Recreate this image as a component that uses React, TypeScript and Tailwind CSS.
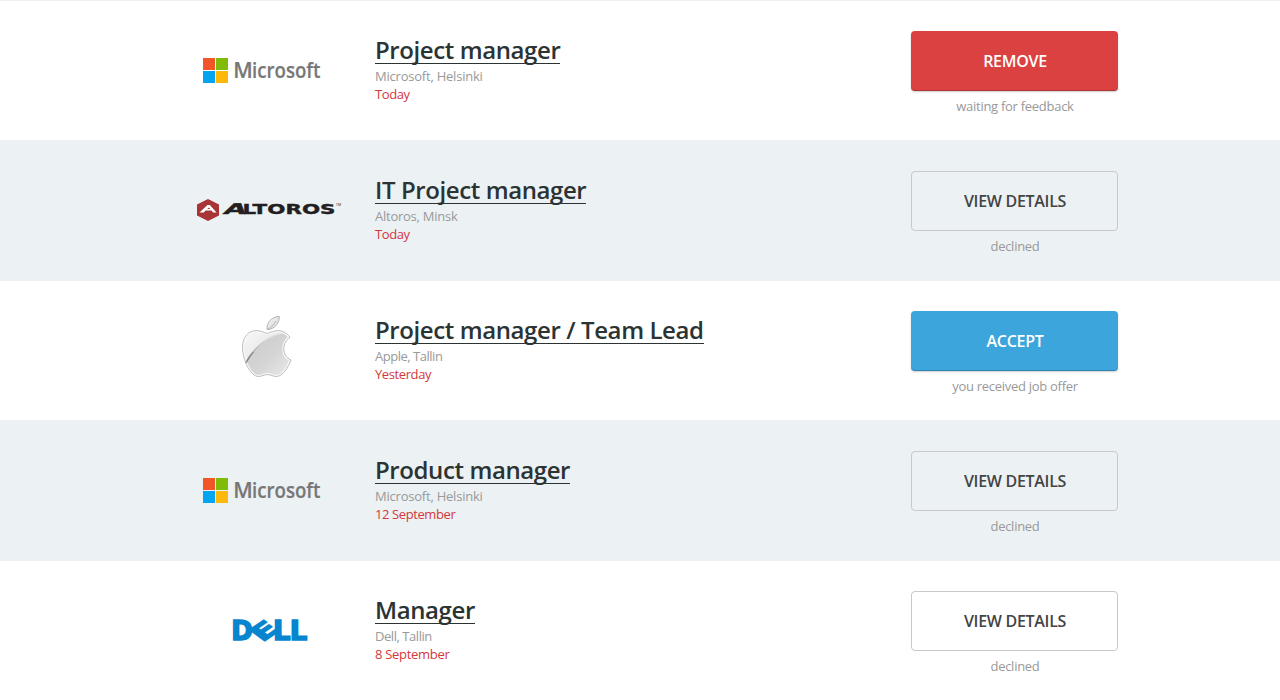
import React from "react";

const openSans = "font-['Open_Sans','Noto_Sans',sans-serif]";
const dejavu = "font-['DejaVu_Sans',sans-serif]";

function MicrosoftLogo() {
  return (
    <svg width="160" height="50" viewBox="190 45 160 50" role="img" aria-label="Microsoft">
      <path fill="#f25528" d="M203 58h12v12h-12z" />
      <path fill="#7fbb08" d="M216 58h12v12h-12z" />
      <path fill="#04a5f0" d="M203 71h12v12h-12z" />
      <path fill="#fdb90a" d="M216 71h12v12h-12z" />
      <g className={openSans} fontSize="21.500" fontWeight="600" fill="#777" stroke="#777" strokeWidth=".2">
        <text x="233.300" y="78" textLength="19.500" lengthAdjust="spacingAndGlyphs">M</text>
        <text x="252" y="78" textLength="68.500" lengthAdjust="spacingAndGlyphs">icrosoft</text>
      </g>
    </svg>
  );
}

function AltorosLogo() {
  return (
    <svg width="160" height="40" viewBox="190 190 160 40" role="img" aria-label="Altoros">
      <path fill="#a83438" d="M208 199l11 5.600v11L208 221l-11-5.400v-11z" />
      <path fill="#fff" fillRule="evenodd" d="M199.500 212.500l8-7.500h2.300l6.700 7.500h-3.400l-1.600-1.900h-5.800l-1.900 1.900zM207.200 209h3l-1.200-1.500z" />
      <g className={dejavu} fontSize="14.800" fontWeight="700" fill="#231f20" stroke="#231f20" strokeWidth=".4">
        <text x="0" y="0" transform="matrix(1 0 -.35 1 222.500 213.900)" textLength="22.500" lengthAdjust="spacingAndGlyphs">A</text>
        <text x="242.500" y="213.900" textLength="93" lengthAdjust="spacingAndGlyphs">LTOROS</text>
      </g>
      <text x="336" y="205.500" className={openSans} fontSize="3.500" fontWeight="600" fill="#555" textLength="5" lengthAdjust="spacingAndGlyphs">TM</text>
    </svg>
  );
}

function AppleLogo() {
  const body =
    "M266.500 333.400C263 332.500 260.500 330.600 256 330.600C248 330.600 242 337 242 347C242 360 250 376.500 258 376.500C261.500 376.500 263.500 374.600 267 374.600C270.500 374.600 272.500 376.500 276 376.500C282 376.500 288 367 290.500 360C286 358 283.300 354 283.300 348.700C283.300 343.500 285.800 340 289.500 337.300C286.500 333 282 330.600 277.500 330.600C273 330.600 270 332.800 266.500 333.400Z";
  return (
    <svg width="75" height="80" viewBox="230.500 310 75 80" role="img" aria-label="Apple">
      <defs>
        <linearGradient id="silver" x1="0" y1="0" x2="1" y2="1">
          <stop offset="0" stopColor="#fafafa" />
          <stop offset=".5" stopColor="#e6e6e6" />
          <stop offset="1" stopColor="#dadada" />
        </linearGradient>
        <linearGradient id="shade" x1="0" y1="1" x2="1" y2="0">
          <stop offset="0" stopColor="#666" />
          <stop offset=".25" stopColor="#a9a9a9" />
          <stop offset=".6" stopColor="#cecece" />
          <stop offset="1" stopColor="#f0f0f0" />
        </linearGradient>
        <linearGradient id="lower" x1="0" y1="0" x2="1" y2="1">
          <stop offset="0" stopColor="#cacaca" />
          <stop offset=".5" stopColor="#d4d4d4" />
          <stop offset="1" stopColor="#ededed" />
        </linearGradient>
        <clipPath id="apple-body"><path d={body} /></clipPath>
      </defs>
      <path d={body} fill="url(#silver)" />
      <g clipPath="url(#apple-body)">
        <path fill="url(#lower)" d="M245 363C252 350 264 337 284 332L294 332V380H250Z" />
        <path fill="none" stroke="url(#shade)" strokeWidth="1.200" d="M245 363C252 350 264 337 284 332" />
        <path d={body} fill="none" stroke="#f8f8f8" strokeWidth="3.200" />
      </g>
      <path d={body} fill="none" stroke="#b8b8b8" strokeWidth=".9" />
      <path d="M245.300 363C248 358.500 250 355.500 253 352" fill="none" stroke="#808080" strokeWidth="1.100" />
      <path d="M266.500 329.500C266 322.500 271 317 278.700 316.300C279.300 323 274 329.500 266.500 329.500Z" fill="url(#silver)" stroke="#aaa" strokeWidth=".9" />
      <path d="M266.800 329.300C270 328 273 325 275.500 321" fill="none" stroke="#b7b7b7" strokeWidth="1" />
    </svg>
  );
}

function DellLogo() {
  return (
    <svg width="100" height="50" viewBox="218.500 605 100 50" role="img" aria-label="Dell">
      <g className={dejavu} fontWeight="700" fill="#0785cf" stroke="#0785cf">
        <g fontSize="26" strokeWidth="1.500">
          <text x="230.700" y="639.600" textLength="21.500" lengthAdjust="spacingAndGlyphs">D</text>
          <text x="272.500" y="639.600" textLength="17.500" lengthAdjust="spacingAndGlyphs">L</text>
          <text x="289.200" y="639.600" textLength="17.500" lengthAdjust="spacingAndGlyphs">L</text>
        </g>
        <text x="0" y="0" fontSize="20" strokeWidth="1" transform="matrix(1.380 -.94 1.050 .76 261.800 642.600)">E</text>
      </g>
    </svg>
  );
}

type Job = {
  title: string;
  place: string;
  date: string;
  action: string;
  status: string;
  logo: () => React.JSX.Element;
  tone: "danger" | "outline" | "primary";
  placeTracking: string;
  dateTracking: string;
};

const jobs: Job[] = [
  { title: "Project manager", place: "Microsoft, Helsinki", date: "Today", action: "REMOVE", status: "waiting for feedback", logo: MicrosoftLogo, tone: "danger", placeTracking: "tracking-[-0.22px]", dateTracking: "tracking-[-0.4px]" },
  { title: "IT Project manager", place: "Altoros, Minsk", date: "Today", action: "VIEW DETAILS", status: "declined", logo: AltorosLogo, tone: "outline", placeTracking: "tracking-[-0.25px]", dateTracking: "tracking-[-0.4px]" },
  { title: "Project manager / Team Lead", place: "Apple, Tallin", date: "Yesterday", action: "ACCEPT", status: "you received job offer", logo: AppleLogo, tone: "primary", placeTracking: "tracking-[-0.48px]", dateTracking: "tracking-[-0.4px]" },
  { title: "Product manager", place: "Microsoft, Helsinki", date: "12 September", action: "VIEW DETAILS", status: "declined", logo: MicrosoftLogo, tone: "outline", placeTracking: "tracking-[-0.22px]", dateTracking: "tracking-[-0.4px]" },
  { title: "Manager", place: "Dell, Tallin", date: "8 September", action: "VIEW DETAILS", status: "declined", logo: DellLogo, tone: "outline", placeTracking: "tracking-[-0.45px]", dateTracking: "tracking-[-0.3px]" },
];

const tones = {
  danger: "bg-[#dc4141] text-white border-b border-[#b03434] shadow-[0_1px_2px_rgba(0,0,0,0.2)]",
  primary: "bg-[#3ba5dc] text-white border-b border-[#2f84b0] shadow-[0_1px_2px_rgba(0,0,0,0.2)]",
  outline: "border border-[#c8c8c8] text-[#444]",
};

export default function App() {
  return (
    <main className={`h-[700px] overflow-hidden bg-white ${openSans}`}>
      {jobs.map((job, i) => {
        const Logo = job.logo;
        const wideLogo = job.logo === MicrosoftLogo || job.logo === AltorosLogo;
        return (
          <section key={i} className={`h-[140px] border-t border-[#ecf1f4] ${i % 2 ? "bg-[#ecf1f4]" : "bg-white"}`}>
            <div className="ml-[162px] flex h-full w-[956px]">
              <div className={`flex w-[213px] shrink-0 justify-center pt-[69px] ${wideLogo ? "pl-[3px]" : ""}`}>
                <div className="flex h-0 items-center"><Logo /></div>
              </div>
              <div className="flex-1 pt-[34px]">
                <h2 className="flex h-[29px] w-fit items-center border-b border-[#2b3333] text-[24px] leading-[29px] font-semibold tracking-[-0.4px] whitespace-nowrap text-[#2b3333]">{job.title}</h2>
                <p className={`mt-[3px] text-[13px] leading-[18px] text-[#999] ${job.placeTracking}`}>{job.place}</p>
                <p className={`text-[13px] leading-[18px] text-[#d4373b] ${job.dateTracking}`}>{job.date}</p>
              </div>
              <div className="w-[207px] shrink-0 pt-[30px] text-center">
                <button className={`block h-[60px] w-full rounded-[4px] pl-[1px] text-[16px] font-semibold tracking-[-0.3px] ${tones[job.tone]}`}>{job.action}</button>
                <p className="mt-[6px] pl-[1px] text-[13px] leading-[18px] tracking-[-0.28px] text-[#999]">{job.status}</p>
              </div>
            </div>
          </section>
        );
      })}
    </main>
  );
}
